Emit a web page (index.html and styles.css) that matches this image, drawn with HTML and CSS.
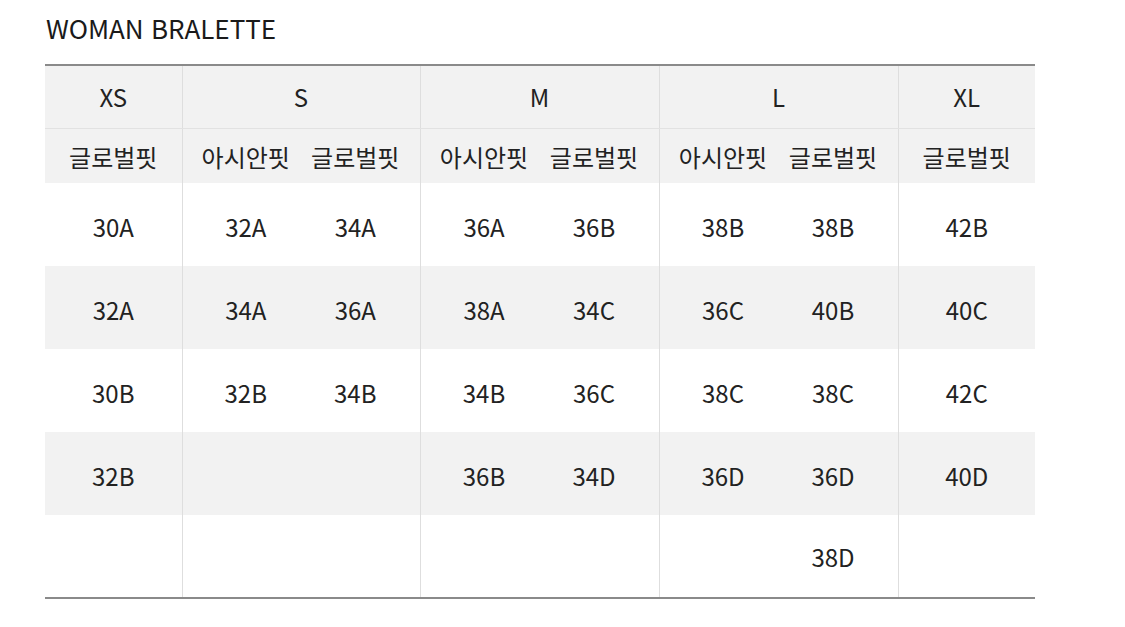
FILE: index.html
```html
<!DOCTYPE html>
<html lang="ko">
<head>
<meta charset="utf-8">
<title>WOMAN BRALETTE</title>
<link rel="stylesheet" href="styles.css">
</head>
<body>
<div class="page">
  <h1 class="title">WOMAN BRALETTE</h1>
  <table class="size-table">
    <colgroup>
      <col class="c-single">
      <col class="c-s"><col class="c-s">
      <col class="c-half"><col class="c-half">
      <col class="c-half"><col class="c-half">
      <col class="c-single">
    </colgroup>
    <thead>
      <tr class="row-size">
        <th class="grp-end">XS</th>
        <th colspan="2" class="grp-end">S</th>
        <th colspan="2" class="grp-end">M</th>
        <th colspan="2" class="grp-end">L</th>
        <th>XL</th>
      </tr>
      <tr class="row-fit">
        <th class="grp-end">글로벌핏</th>
        <th class="sub-a">아시안핏</th><th class="sub-b grp-end">글로벌핏</th>
        <th class="sub-a">아시안핏</th><th class="sub-b grp-end">글로벌핏</th>
        <th class="sub-a">아시안핏</th><th class="sub-b grp-end">글로벌핏</th>
        <th>글로벌핏</th>
      </tr>
    </thead>
    <tbody>
      <tr>
        <td class="grp-end">30A</td>
        <td class="sub-a">32A</td><td class="sub-b grp-end">34A</td>
        <td class="sub-a">36A</td><td class="sub-b grp-end">36B</td>
        <td class="sub-a">38B</td><td class="sub-b grp-end">38B</td>
        <td>42B</td>
      </tr>
      <tr class="alt">
        <td class="grp-end">32A</td>
        <td class="sub-a">34A</td><td class="sub-b grp-end">36A</td>
        <td class="sub-a">38A</td><td class="sub-b grp-end">34C</td>
        <td class="sub-a">36C</td><td class="sub-b grp-end">40B</td>
        <td>40C</td>
      </tr>
      <tr>
        <td class="grp-end">30B</td>
        <td class="sub-a">32B</td><td class="sub-b grp-end">34B</td>
        <td class="sub-a">34B</td><td class="sub-b grp-end">36C</td>
        <td class="sub-a">38C</td><td class="sub-b grp-end">38C</td>
        <td>42C</td>
      </tr>
      <tr class="alt">
        <td class="grp-end">32B</td>
        <td class="sub-a"></td><td class="sub-b grp-end"></td>
        <td class="sub-a">36B</td><td class="sub-b grp-end">34D</td>
        <td class="sub-a">36D</td><td class="sub-b grp-end">36D</td>
        <td>40D</td>
      </tr>
      <tr class="last">
        <td class="grp-end"></td>
        <td class="sub-a"></td><td class="sub-b grp-end"></td>
        <td class="sub-a"></td><td class="sub-b grp-end"></td>
        <td class="sub-a"></td><td class="sub-b grp-end">38D</td>
        <td></td>
      </tr>
    </tbody>
  </table>
</div>
</body>
</html>
```

FILE: styles.css
```css
html, body {
  margin: 0;
  padding: 0;
  background: #ffffff;
}

body {
  font-family: "Noto Sans CJK KR", "Noto Sans", sans-serif;
  color: #222222;
}

.page {
  padding: 12px 0 0 45px;
}

.title {
  margin: 0 0 20px 1px;
  font-size: 26px;
  font-weight: 400;
  line-height: 32px;
  color: #1a1a1a;
}

.size-table {
  width: 990px;
  border-collapse: collapse;
  table-layout: fixed;
  border-top: 2px solid #8a8a8a;
  border-bottom: 2px solid #8a8a8a;
}

.c-single { width: 137px; }
.c-s { width: 119px; }
.c-half { width: 119.5px; }

.size-table th,
.size-table td {
  box-sizing: border-box;
  padding: 0;
  text-align: center;
  font-weight: 400;
  font-size: 24px;
  line-height: 32px;
  color: #222222;
}

.size-table .sub-a { padding-left: 8px; }
.size-table .sub-b { padding-right: 10px; }

.size-table .grp-end {
  border-right: 1px solid #dedede;
}

.row-size th {
  height: 63px;
  background: #f2f2f2;
  border-bottom: 1px solid #e2e2e2;
  padding-top: 1px;
}

.row-fit th {
  height: 55px;
  background: #f2f2f2;
  padding-top: 2px;
}

.size-table tbody td {
  height: 83px;
  padding-top: 5px;
}

.size-table tbody tr.alt td {
  background: #f2f2f2;
}

.size-table tbody tr.last td {
  height: 83px;
  padding-top: 1px;
}
```
